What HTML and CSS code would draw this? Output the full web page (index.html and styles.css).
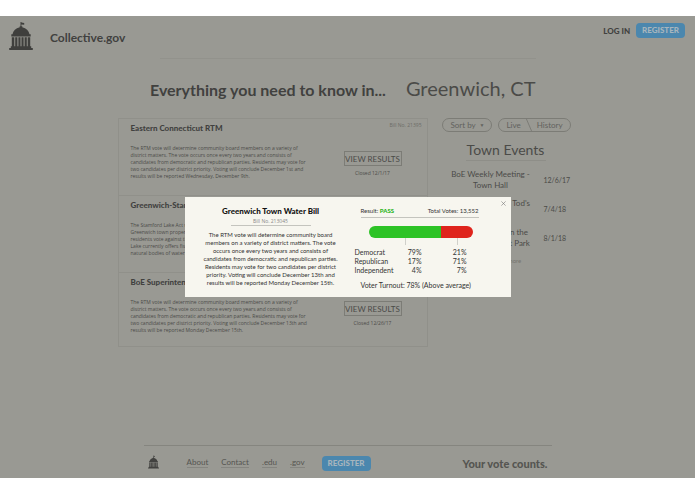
FILE: index.html
```html
<!DOCTYPE html>
<html lang="en">
<head>
<meta charset="utf-8">
<title>Collective.gov</title>
<link rel="stylesheet" href="styles.css">
</head>
<body>
<svg class="defs" aria-hidden="true">
  <symbol id="capitol" viewBox="0 0 24 28">
    <path d="M11.500 0h.9v.4l2.800.5v1.900l-2.800-.2v1.600h.9v1c3.900.9 6.500 3.400 7.200 7h1.200v2.400H2.300v-2.400h1.200c.7-3.600 3.300-6.100 7.200-7v-1h.8z"/>
    <path d="M2.800 15.200h2.500v9.300H2.800zM6.200 15.200h2.200v9.300H6.200zM9.400 15.200h2.100v9.300H9.400zM12.500 15.200h2.100v9.300h-2.100zM15.600 15.200h2.200v9.300h-2.200zM18.700 15.200h2.500v9.300h-2.500zM1.800 24.300h20.400v1.700H1.800zM.2 26h23.600v2H.2z"/>
  </symbol>
</svg>
<div class="screen">
  <header class="header">
    <svg class="logo"><use href="#capitol"/></svg>
    <span class="brand">Collective.gov</span>
    <nav class="account">
      <a class="login" href="#">LOG IN</a>
      <button class="register">REGISTER</button>
    </nav>
  </header>
  <div class="hero">
    <h1>Everything you need to know in...</h1>
    <span class="town">Greenwich, CT</span>
  </div>
  <main class="main">
    <section class="bills">
      <article class="bill">
        <div class="bill-text">
          <h2>Eastern Connecticut RTM</h2>
          <p>The RTM vote will determine community board members on a variety of<br>district matters. The vote occurs once every two years and consists of<br>candidates from democratic and republican parties. Residents may vote for<br>two candidates per district priority. Voting will conclude December 1st and<br>results will be reported Wednesday, December 9th.</p>
        </div>
        <div class="bill-side">
          <span class="bill-no">Bill No. 21395</span>
          <button class="view">VIEW RESULTS</button>
          <span class="closed">Closed 12/1/17</span>
        </div>
      </article>
      <article class="bill">
        <div class="bill-text">
          <h2>Greenwich-Stamford</h2>
          <p>The Stamford Lake Act will<br>Greenwich town property<br>residents vote against the<br>Lake currently offers fishing<br>natural bodies of water.</p>
        </div>
      </article>
      <article class="bill">
        <div class="bill-text">
          <h2>BoE Superintendent</h2>
          <p>The RTM vote will determine community board members on a variety of<br>district matters. The vote occurs once every two years and consists of<br>candidates from democratic and republican parties. Residents may vote for<br>two candidates per district priority. Voting will conclude December 13th and<br>results will be reported Monday December 15th.</p>
        </div>
        <div class="bill-side">
          <button class="view">VIEW RESULTS</button>
          <span class="closed">Closed 12/26/17</span>
        </div>
      </article>
    </section>
    <aside class="side">
      <div class="filters">
        <button class="pill">Sort by <span class="caret">▼</span></button>
        <div class="pill toggle">
          <button>Live</button>
          <svg class="slash" viewBox="0 0 8 14"><path d="M1 0L7 14"/></svg>
          <button>History</button>
        </div>
      </div>
      <h2 class="events-title">Town Events</h2>
      <ul class="events">
        <li><span>BoE Weekly Meeting -<br>Town Hall</span><time>12/6/17</time></li>
        <li><span>Fireworks Day at Tod's<br>Point</span><time>7/4/18</time></li>
        <li><span>Summer Movie in the<br>Greenwich Street Park</span><time>8/1/18</time></li>
      </ul>
      <a class="more" href="#">Show more</a>
    </aside>
  </main>
  <footer class="footer">
    <svg class="logo-small"><use href="#capitol"/></svg>
    <nav class="links">
      <a href="#">About</a><a href="#">Contact</a><a href="#">.edu</a><a href="#">.gov</a>
    </nav>
    <button class="register">REGISTER</button>
    <span class="slogan">Your vote counts.</span>
  </footer>
  <div class="modal" role="dialog" aria-labelledby="modal-title">
    <button class="close" aria-label="Close"><svg viewBox="0 0 5 5"><path d="M.4.4l4.200 4.200M4.600.4L.4 4.600"/></svg></button>
    <section class="summary">
      <h2 id="modal-title">Greenwich Town Water Bill</h2>
      <span class="number">Bill No. 213045</span>
      <p>The RTM vote will determine community board<br>members on a variety of district matters. The vote<br>occurs once every two years and consists of<br>candidates from democratic and republican parties.<br>Residents may vote for two candidates per district<br>priority. Voting will conclude December 13th and<br>results will be reported Monday December 15th.</p>
    </section>
    <section class="results">
      <div class="totals"><span>Result: <b>PASS</b></span><span>Total Votes: 13,552</span></div>
      <div class="bar"><span class="yes"></span><span class="no"></span></div>
      <table>
        <tr><th>Democrat</th><td>79%</td><td>21%</td></tr>
        <tr><th>Republican</th><td>17%</td><td>71%</td></tr>
        <tr><th>Independent</th><td>4%</td><td>7%</td></tr>
      </table>
      <p class="turnout">Voter Turnout: 78% (Above average)</p>
    </section>
  </div>
</div>
</body>
</html>
```
FILE: styles.css
```css
* { box-sizing: border-box; margin: 0; padding: 0; }
body { background: #fff; padding: 16px 0; font-family: Lato, sans-serif; font-size: 8px; color: #4b4b48; }
button { font: inherit; color: inherit; background: none; border: 0; }
a { color: inherit; text-decoration: none; }
.defs { position: absolute; width: 0; height: 0; }
.screen { position: relative; background: #999993; }

.header { display: flex; align-items: flex-start; height: 42px; padding: 6px 10px 0 9px; }
.logo { width: 24px; height: 28px; fill: #3f3f3d; }
.brand { margin: 9px 0 0 17px; font-size: 12px; line-height: 14px; font-weight: 700; color: #41413f; }
.account { margin-left: auto; display: flex; align-items: center; gap: 6px; padding-top: 1px; }
.login { font-size: 8px; font-weight: 900; color: #41413f; }
.register { height: 15px; padding: 0 6px; border-radius: 4px; background: #4b87ae; color: #a7b5bd; font-size: 8px; line-height: 15px; font-weight: 900; }

.hero { display: flex; align-items: baseline; justify-content: flex-end; gap: 20px; width: 376px; margin: 0 auto; border-top: 1px solid #92928c; padding-top: 15px; line-height: 28px; white-space: nowrap; }
.hero h1 { font-size: 16px; font-weight: 700; color: #41413f; }
.town { font-size: 20px; }

.main { display: flex; align-items: flex-start; gap: 14px; width: 460px; margin: 14px auto 0; }
.bills { flex: 1; border: 1px solid #90908a; }
.bill { display: flex; justify-content: space-between; height: 77px; padding: 3px 5px 0 12px; white-space: nowrap; }
.bill + .bill { border-top: 1px solid #90908a; }
.bill:first-child { height: 76px; }
.bill:last-child { height: 74px; }
.bill h2 { font-size: 8px; line-height: 12px; font-weight: 900; color: #41413f; }
.bill p { margin-top: 11px; font-family: "Open Sans", sans-serif; font-size: 5px; line-height: 7px; }
.bill-side { width: 78px; display: flex; flex-direction: column; align-items: flex-start; gap: 3px; padding-top: 29px; position: relative; }
.bill:last-child .bill-side { padding-top: 25px; }
.bill-no { position: absolute; top: 0; right: 0; font-family: "Open Sans", sans-serif; font-size: 5px; line-height: 7px; color: #6c6c67; }
.view { width: 58px; height: 15px; border: 1px solid #7c7c76; font-size: 8px; }
.closed { width: 58px; text-align: center; font-family: "Open Sans", sans-serif; font-size: 5px; line-height: 8px; }

.side { width: 136px; display: flex; flex-direction: column; }
.filters { display: flex; gap: 6px; }
.pill { height: 14px; border: 1px solid #7c7c76; border-radius: 7px; padding: 0 6px 0 8px; font-size: 8px; line-height: 12px; color: #62625e; white-space: nowrap; }
.caret { font-size: 5px; margin-left: 2px; vertical-align: 1px; }
.toggle { display: flex; align-items: center; gap: 4px; padding-right: 7px; }
.slash { width: 8px; height: 14px; fill: none; stroke: #7c7c76; stroke-width: 1; flex: none; }
.events-title { width: 80px; margin: 7px 0 0 24px; border-bottom: 1px solid #8e8e88; font-size: 14px; line-height: 21px; font-weight: 400; text-align: center; white-space: nowrap; }
.events { list-style: none; margin-top: 8px; display: grid; gap: 7px; }
.events li { display: flex; align-items: center; gap: 4px; font-size: 8px; line-height: 11px; }
.events span { width: 98px; text-align: center; white-space: nowrap; }
.events time { font-size: 7px; }
.more { width: 130px; margin-top: 8px; text-align: center; font-size: 6px; line-height: 8px; color: #75756f; }

.footer { display: flex; align-items: center; width: 408px; height: 33px; margin: 98px auto 0; padding: 2px 4px 0; border-top: 1px solid #85857f; }
.logo-small { width: 11px; height: 14px; margin-top: -3px; fill: #41413f; }
.links { display: flex; gap: 13px; margin: 0 17px 0 28px; font-size: 8px; line-height: 9px; color: #555551; }
.links a { border-bottom: 1px solid #858580; }
.slogan { margin-left: auto; font-size: 11px; font-weight: 900; color: #555551; }

.modal { position: absolute; top: 181px; left: 50%; margin-left: -163px; width: 326px; height: 100px; display: flex; background: #f7f6ef; color: #333; padding: 8px 32px 0 18px; gap: 16px; }
.close { position: absolute; top: 4px; right: 5px; width: 5px; height: 5px; }
.close svg { display: block; width: 5px; height: 5px; stroke: #777; stroke-width: .6; }
.summary { width: 136px; display: flex; flex-direction: column; align-items: center; text-align: center; white-space: nowrap; }
.summary h2 { font-size: 8px; line-height: 12px; font-weight: 900; color: #111; }
.number { width: 80px; border-bottom: 1px solid #c4c4be; font-family: "Open Sans", sans-serif; font-size: 5px; line-height: 8px; color: #888; }
.summary p { margin-top: 5px; font-size: 6px; line-height: 8px; }
.results { flex: 1; white-space: nowrap; font-size: 7px; }
.totals { display: flex; justify-content: space-between; margin-left: 6px; border-bottom: 1px solid #c4c4be; font-size: 6px; line-height: 12px; }
.totals b { color: #2ab522; font-weight: 900; }
.bar { display: flex; height: 12px; margin: 8px 6px 0 14px; }
.bar span { position: relative; }
.bar span::after { content: ""; position: absolute; top: 12px; left: 50%; height: 7px; border-left: 1px solid #d0d0ca; }
.yes { flex: 70; background: #2dc326; border-radius: 6px 0 0 6px; }
.no { flex: 30; background: #df241c; border-radius: 0 6px 6px 0; }
table { width: 112px; margin-top: 10px; border-collapse: collapse; table-layout: fixed; line-height: 9px; }
th { width: 48px; text-align: left; font-weight: 400; }
td { text-align: right; }
td:nth-child(2) { width: 19px; }
.turnout { margin-top: 5px; padding-left: 6px; line-height: 10px; }
```
